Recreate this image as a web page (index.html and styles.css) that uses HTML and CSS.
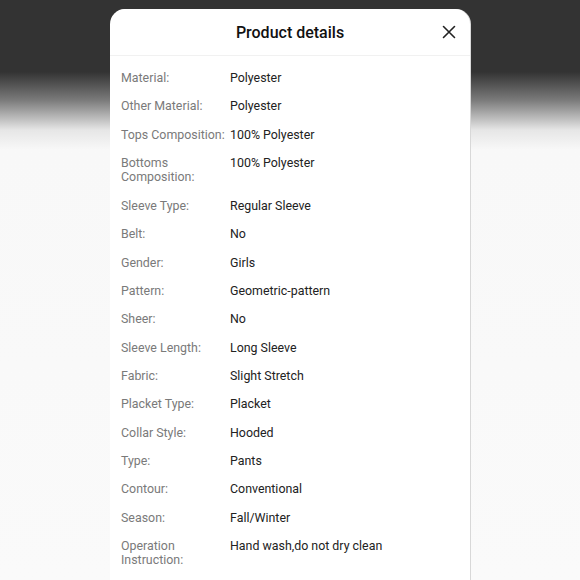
FILE: index.html
```html
<!DOCTYPE html>
<html>
<head>
<meta charset="utf-8">
<link rel="stylesheet" href="styles.css">
</head>
<body>
<div class="sheet">
  <div class="header">
    <h1 class="title">Product details</h1>
    <button class="close" aria-label="Close">
      <svg width="14" height="14" viewBox="0 0 14 14"><path d="M1.5 1.5L12.5 12.5M12.5 1.5L1.5 12.5" stroke="#222" stroke-width="1.6" stroke-linecap="round" fill="none"/></svg>
    </button>
  </div>
  <dl class="specs">
    <div class="row"><dt>Material:</dt><dd>Polyester</dd></div>
    <div class="row"><dt>Other Material:</dt><dd>Polyester</dd></div>
    <div class="row"><dt>Tops Composition:</dt><dd>100% Polyester</dd></div>
    <div class="row"><dt>Bottoms Composition:</dt><dd>100% Polyester</dd></div>
    <div class="row"><dt>Sleeve Type:</dt><dd>Regular Sleeve</dd></div>
    <div class="row"><dt>Belt:</dt><dd>No</dd></div>
    <div class="row"><dt>Gender:</dt><dd>Girls</dd></div>
    <div class="row"><dt>Pattern:</dt><dd>Geometric-pattern</dd></div>
    <div class="row"><dt>Sheer:</dt><dd>No</dd></div>
    <div class="row"><dt>Sleeve Length:</dt><dd>Long Sleeve</dd></div>
    <div class="row"><dt>Fabric:</dt><dd>Slight Stretch</dd></div>
    <div class="row"><dt>Placket Type:</dt><dd>Placket</dd></div>
    <div class="row"><dt>Collar Style:</dt><dd>Hooded</dd></div>
    <div class="row"><dt>Type:</dt><dd>Pants</dd></div>
    <div class="row"><dt>Contour:</dt><dd>Conventional</dd></div>
    <div class="row"><dt>Season:</dt><dd>Fall/Winter</dd></div>
    <div class="row"><dt>Operation Instruction:</dt><dd>Hand wash,do not dry clean</dd></div>
  </dl>
</div>
</body>
</html>
```
FILE: styles.css
```css
html, body {
  margin: 0;
  padding: 0;
  height: 100%;
  overflow: hidden;
}
body {
  background: linear-gradient(to bottom, #333 0, #333 72px, #7a7a7a 100px, #e6e6e6 130px, #f8f8f8 150px, #fafafa 100%);
  font-family: Roboto, "Liberation Sans", sans-serif;
  padding-top: 9px;
}
.sheet {
  margin-left: 110px;
  width: 360px;
  min-height: 600px;
  background: #fff;
  border-radius: 15px 15px 0 0;
  box-shadow: 1px 0 0 #d8d8d8;
}
.header {
  height: 46px;
  border-bottom: 1px solid #f1f1f1;
  display: flex;
  align-items: center;
  justify-content: center;
  position: relative;
}
.title {
  margin: 0;
  font-size: 16px;
  font-weight: 500;
  color: #111;
}
.close {
  position: absolute;
  right: 14px;
  top: 16px;
  border: 0;
  background: none;
  padding: 0;
  width: 14px;
  height: 14px;
  display: flex;
}
.specs {
  margin: 0;
  padding: 15px 11px 0 11px;
  display: flex;
  flex-direction: column;
  gap: 14px;
  font-size: 12.4px;
  line-height: 14.36px;
}
.row {
  display: flex;
}
.row dt {
  width: 109px;
  flex: none;
  color: #7a7a7a;
}
.row dd {
  margin: 0;
  color: #222;
}
```
